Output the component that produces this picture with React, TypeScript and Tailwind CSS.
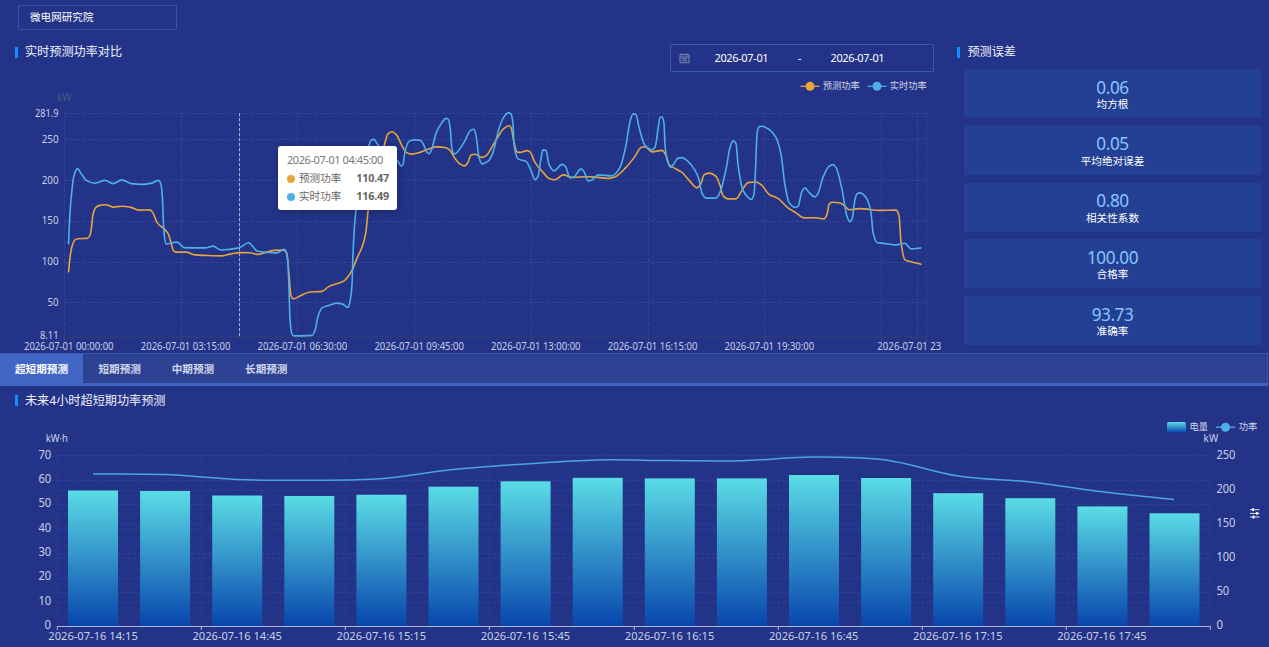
import React from "react";

type Point = [number, number];

const FORECAST: Point[] = [
  [68.5, 273], [70, 258], [72, 247], [75, 240.5], [78, 239.3], [87, 239], [90, 236], [91.5, 228], [93, 215], [96, 208], [100, 206], [104, 205.4],
  [107, 205.6], [113, 207.7], [122, 206.8], [131, 208], [139, 210.7], [150, 210.5], [153, 213.5], [157, 223], [164, 229.5], [168, 234], [171, 243],
  [173.5, 251.5], [176, 252.7], [186, 252.7], [195, 255.5], [205, 256], [222, 256.5], [231, 254.5], [240, 253.2], [250, 253.3], [257, 255],
  [266, 253], [274, 251], [284, 250.7], [287, 255], [289, 275], [291, 296.5], [293.5, 299.5], [301, 296], [309, 292.8], [322, 292], [329, 287],
  [344, 281.5], [352, 271], [356.5, 260], [363, 245], [366, 232], [368, 212], [372, 185], [378, 172], [384, 147], [388, 134.5], [392, 132.3],
  [396, 135], [404, 150], [407, 153.5], [411, 154.7], [420, 153], [430, 149], [436, 147.5], [446, 148.3], [450, 151], [455, 159], [460, 164.5],
  [464.5, 166.5], [468, 163], [471, 155.5], [475, 154.8], [482, 158], [486, 156.5], [490, 151], [497, 139], [504, 129], [509, 126.3], [511, 128],
  [514, 143], [517, 152.5], [520, 153], [527, 151.2], [530, 152.5], [535, 163], [543, 173], [549, 179], [555, 180.3], [563, 175.5], [573, 178],
  [587, 177.3], [598, 178], [609, 179], [615, 177.5], [626, 168], [635, 157], [641, 148], [645, 147.3], [652, 152.5], [662, 151], [666, 156],
  [669, 165], [674, 168.5], [682, 173], [690, 182], [697, 188.5], [701, 184], [704, 175.5], [709, 173.7], [716, 177], [720, 186], [723, 196],
  [728, 199.5], [736, 199.5], [742, 191], [748, 183.2], [756, 182.6], [762, 186], [769, 195], [778, 199], [788, 208.5], [796, 213.5], [804, 218.5],
  [815, 218.3], [824, 219.5], [827, 215], [829, 205], [832, 202.9], [840, 203.6], [844, 206], [849, 210.3], [860, 209.2], [880, 211], [896, 210.7],
  [899, 216], [901, 243], [905, 260.5], [912, 262.5], [921.5, 265],
];

const ACTUAL: Point[] = [
  [68.5, 245], [70, 213], [72, 190], [74, 176], [77.5, 169.2], [81, 174], [87, 181.5], [95, 183.8], [105, 181], [113, 184.2], [122, 180.5],
  [131, 184.2], [142, 185], [152, 183.7], [158.5, 181], [161, 185], [162.5, 200], [163.5, 225], [164.5, 238], [166, 244.5], [177, 242.7],
  [184, 248.2], [205, 248.5], [213, 246.7], [221, 250.6], [239, 248.5], [248.5, 243.3], [257, 251.5], [265, 252.8], [277, 253.5], [284, 250],
  [286, 252], [288, 265], [289, 290], [290, 320], [292, 335], [294, 336.5], [312, 336], [315, 331], [318, 317], [322, 308.5], [329, 306],
  [337, 303.7], [342, 304.5], [348, 308], [350, 302], [352, 285], [353, 255], [355, 220], [357, 205], [361, 180], [366, 160], [369, 146],
  [371, 141], [374, 140], [377, 144], [381, 150], [390, 158], [398, 162], [401, 166.5], [403, 165], [405, 152], [409, 142], [415, 140.5],
  [420, 140.8], [423, 144], [427, 153], [429, 154.3], [432, 149], [436, 134], [442, 123], [446, 119], [448, 119.5], [450, 127], [452, 150],
  [454.5, 154.5], [464, 143], [471, 130.5], [474, 129.8], [476, 136], [479, 158], [482, 164.5], [489, 161], [493, 153], [499, 129], [504, 117.5],
  [508, 113.5], [511, 114.5], [513, 125], [514, 145], [518, 159.5], [526, 162], [531, 171], [535, 180.3], [538, 177], [541, 159], [543, 150.5],
  [546, 151], [549, 165], [554, 171.5], [562, 165], [565.5, 167], [570, 178.5], [574, 177.5], [581, 169.5], [584, 172], [588, 181.5],
  [592, 180.5], [598, 175.5], [612, 176.5], [620, 168], [626, 146], [630, 122], [633, 114.5], [636, 115], [639, 128], [645, 146], [652, 150.5],
  [655, 148], [658, 130], [660, 118], [662, 117.5], [664, 124], [665, 145], [667, 160], [671, 168], [674, 164], [678, 158.7], [682, 158.2],
  [688, 162], [695, 171], [699, 180], [702, 194], [706, 198.7], [716, 198.7], [720, 193], [726, 170], [730, 148], [733, 141.5], [736, 144],
  [738, 165], [743, 191], [748, 198], [751, 200], [754, 195], [755.5, 170], [757, 135], [759, 127.3], [762, 126.8], [769, 130], [776, 138],
  [781, 155], [785, 186], [789, 203], [795, 208], [798, 207], [802, 192], [805, 188.5], [809, 193], [815, 197.5], [818, 194], [823, 178],
  [829, 167], [833, 165.2], [836, 168], [842, 190], [847, 217], [850, 222.5], [852, 220], [855, 200], [857, 194.5], [860, 193.5], [866, 198],
  [871, 213], [873, 233], [877, 243], [884, 244], [896, 245.5], [905, 243.8], [911, 249.5], [921.5, 248.5],
];

const POWER: Point[] = [
  [93, 474], [165, 474.6], [237, 479.4], [309, 480.2], [381, 478.8], [453, 469.5], [525, 464], [597, 460], [669, 460.6], [741, 460.7],
  [813, 457], [886, 460], [958, 476], [1030, 482], [1102, 491.8], [1174, 499.5],
];

const BAR_TOPS = [490.5, 491, 495.5, 496, 494.7, 486.7, 481.3, 477.8, 478.4, 478.4, 475, 478, 493.2, 498.2, 506.4, 513.3];

/* Cubic interpolation through the points; monotone unless loose is set */
function smooth(p: Point[], loose = false): string {
  const n = p.length;
  const d = p.slice(1).map((q, i) => (q[1] - p[i][1]) / (q[0] - p[i][0]));
  const m = p.map((_, i) => {
    if (i === 0) return d[0];
    if (i === n - 1) return d[n - 2];
    if (loose) return (d[i - 1] + d[i]) / 2;
    if (d[i - 1] * d[i] <= 0) return 0;
    const a = p[i][0] - p[i - 1][0];
    const b = p[i + 1][0] - p[i][0];
    return (3 * (a + b)) / ((2 * b + a) / d[i - 1] + (b + 2 * a) / d[i]);
  });
  let out = `M${p[0][0]},${p[0][1]}`;
  for (let i = 1; i < n; i++) {
    const h = (p[i][0] - p[i - 1][0]) / 3;
    out += `C${p[i - 1][0] + h},${p[i - 1][1] + m[i - 1] * h} ${p[i][0] - h},${p[i][1] - m[i] * h} ${p[i][0]},${p[i][1]}`;
  }
  return out;
}

function Title({ children }: { children: React.ReactNode }) {
  return (
    <h2 className="flex h-4 items-center gap-[7.4px] text-[12.15px] leading-4 text-[#eef1fb]">
      <span className="h-[11px] w-[3px] bg-[#168cff]" />
      {children}
    </h2>
  );
}

function LegendLine({ x, y, color }: { x: number; y: number; color: string }) {
  return (
    <g>
      <path d={`M${x},${y}h19`} stroke={color} strokeWidth="1.3" />
      <circle cx={x + 9.5} cy={y} r="4.5" fill={color} />
    </g>
  );
}

const Y_TOP: [string, number, number][] = [
  ["281.9", 113.5, 23.5], ["250", 139.5, 16.8], ["200", 180.5, 16.8], ["150", 221.3, 16.8], ["100", 262, 16.8], ["50", 302.8, 11], ["8.11", 337, 18.5],
];
const X_TOP: [string, number, number][] = [
  ["2026-07-01 00:00:00", 24, 89.5], ["2026-07-01 03:15:00", 140.8, 89.5], ["2026-07-01 06:30:00", 257.6, 89.5], ["2026-07-01 09:45:00", 374.4, 89.5],
  ["2026-07-01 13:00:00", 491, 89.5], ["2026-07-01 16:15:00", 607.8, 89.5], ["2026-07-01 19:30:00", 724.6, 89.5], ["2026-07-01 23", 877.3, 64],
];
const GRID_TOP = [64.5, 181.5, 297.5, 414.5, 531.5, 648.5, 764.5, 881.5, 917.5, 926.5];

function PowerChart() {
  return (
    <svg className="block h-[278px] w-[948px]" viewBox="0 75 948 278" fill="none">
      <g stroke="#374a9b" strokeWidth="1" strokeDasharray="4 1.8" opacity="0.75">
        {Y_TOP.slice(0, 6).map(([t, y]) => (
          <path key={t} d={`M64.5,${Math.floor(y) + 0.5}H927`} />
        ))}
        {GRID_TOP.map((x) => (
          <path key={x} d={`M${x},113V336`} />
        ))}
      </g>
      <path d="M64,337H927" stroke="#2f4075" />
      <path d={GRID_TOP.filter((x) => x !== 917.5).map((x) => `M${x},337v4`).join("")} stroke="#354576" />
      <path d="M239.5,113V337" stroke="#a5aed7" strokeDasharray="3.3 1.7" />
      <g transform="translate(0 -0.6)" strokeWidth="1.6" strokeLinejoin="round">
        <path d={smooth(FORECAST)} stroke="#e8a53c" />
        <path d={smooth(ACTUAL)} stroke="#4fb0e8" />
      </g>
      <text x="57" y="100.5" fontSize="10.3" fill="#4a5a85" textLength="14.5" lengthAdjust="spacingAndGlyphs">kW</text>
      <g fontSize="10.4" fill="#cbd0e8">
        {Y_TOP.map(([t, y, w]) => (
          <text key={t} x={58.5 - w} y={y + (t === "8.11" ? 2 : 3)} textLength={w} lengthAdjust="spacingAndGlyphs">{t}</text>
        ))}
        {X_TOP.map(([t, x, w]) => (
          <text key={t} x={x} y="349.6" textLength={w} lengthAdjust="spacingAndGlyphs">{t}</text>
        ))}
      </g>
      <LegendLine x={800.5} y={86.3} color="#e8a53c" />
      <LegendLine x={867.5} y={86.3} color="#4fb0e8" />
      <g fontSize="9.3" fill="#d0d5ec">
        <text x="822.7" y="89.3">预测功率</text>
        <text x="889.7" y="89.3">实时功率</text>
      </g>
    </svg>
  );
}

function EnergyChart() {
  const step = 1153 / 16;
  const line = { left: 57, right: 1210, top: 455.5, bottom: 626.5 };
  return (
    <svg className="block h-[236px] w-[1269px]" viewBox="0 411 1269 236" fill="none">
      <defs>
        <linearGradient id="energy" x1="0" y1="0" x2="0" y2="1">
          <stop offset="0" stopColor="#5adce5" />
          <stop offset="0.5" stopColor="#3291c9" />
          <stop offset="1" stopColor="#0846ad" />
        </linearGradient>
      </defs>
      <g stroke="#34479a" strokeDasharray="4 1.8" opacity="0.65">
        {[0, 1, 2, 3, 4, 5, 6].map((i) => (
          <path key={i} d={`M${line.left},${Math.round(line.top + i * 24.4) + (i ? 0.5 : -0.5)}H${line.right}`} />
        ))}
        {[0, 1, 2, 3, 4].map((i) => (
          <path key={i} d={`M${line.left},${Math.round(line.top + i * 34.15) + (i ? 0.5 : -0.5)}H${line.right}`} />
        ))}
        {[0, 2, 4, 6, 8, 10, 12, 14, 16].map((i) => (
          <path key={i} d={`M${Math.round(line.left + i * step) + 0.3},455V626`} />
        ))}
      </g>
      <path d="M57,626.5H1210.5" stroke="#aeb6d9" />
      <path d={[0, 2, 4, 6, 8, 10, 12, 14, 16].map((i) => `M${Math.round(line.left + i * step) + 0.3},626v4`).join("")} stroke="#aeb6d9" />
      {BAR_TOPS.map((y, i) => (
        <rect key={i} x={68 + i * 72.1} y={y} width="50" height={626 - y} fill="url(#energy)" />
      ))}
      <path d={smooth(POWER, true)} stroke="#4aa6dc" strokeWidth="1.5" />
      <g fill="#cbd0e8" fontSize="11.8">
        {["70", "60", "50", "40", "30", "20", "10"].map((t, i) => (
          <text key={t} x="38.4" y={458.6 + i * 24.35} textLength="12.8" lengthAdjust="spacingAndGlyphs">{t}</text>
        ))}
        <text x="44.6" y="629" textLength="6.5" lengthAdjust="spacingAndGlyphs">0</text>
        {["250", "200", "150", "100"].map((t, i) => (
          <text key={t} x="1216.4" y={458.5 + i * 34.05} textLength="19" lengthAdjust="spacingAndGlyphs">{t}</text>
        ))}
        <text x="1216.4" y="595" textLength="12.8" lengthAdjust="spacingAndGlyphs">50</text>
        <text x="1216.4" y="629" textLength="6.5" lengthAdjust="spacingAndGlyphs">0</text>
      </g>
      <g fill="#cbd0e8" fontSize="11.6">
        {["14:15", "14:45", "15:15", "15:45", "16:15", "16:45", "17:15", "17:45"].map((t, i) => (
          <text key={t} x={48.3 + i * step * 2} y="640.3" textLength="89.5" lengthAdjust="spacingAndGlyphs">{`2026-07-16 ${t}`}</text>
        ))}
      </g>
      <g fill="#d0d5ec" fontSize="10.3">
        <text x="45.7" y="441.5" textLength="22.3" lengthAdjust="spacingAndGlyphs">kW·h</text>
        <text x="1203.6" y="441.8" textLength="14.5" lengthAdjust="spacingAndGlyphs">kW</text>
      </g>
      <rect x="1167" y="422" width="19" height="10.5" rx="1.8" fill="url(#energy)" />
      <LegendLine x={1216} y={427.2} color="#4fb0e8" />
      <g fontSize="9.3" fill="#d0d5ec">
        <text x="1189.5" y="429.6">电量</text>
        <text x="1238.7" y="429.6">功率</text>
      </g>
      <g stroke="#fff" strokeWidth="1">
        <path d="M1250,509.7h9.5M1250,513.4h9.5M1250,517h9.5" opacity="0.85" />
        <path d="M1253,508.3v2.8M1257,512v2.8M1253.5,515.6v2.8" strokeWidth="1.8" />
      </g>
    </svg>
  );
}

function Tooltip() {
  const rows = [
    { name: "预测功率", value: "110.47", dot: "bg-[#e8a53c]" },
    { name: "实时功率", value: "116.49", dot: "bg-[#4fb0e8]" },
  ];
  return (
    <div className="absolute left-[278px] top-[146px] h-[64px] w-[119px] rounded-[3px] bg-white pl-[9px] pr-[8px] pt-[6px] text-[10.6px] text-[#666] shadow-[1px_2px_8px_rgba(0,0,0,0.25)]">
      <div className="flex h-[17px] items-center whitespace-nowrap text-[11px] tracking-[-0.43px] text-[#777]">2026-07-01 04:45:00</div>
      {rows.map((r) => (
        <div key={r.name} className="flex h-[18px] items-center pt-px">
          <span className={`mr-[4px] size-[8px] shrink-0 rounded-full ${r.dot}`} />
          <span>{r.name}</span>
          <b className="ml-auto text-[10.8px] tracking-[-0.2px]">{r.value}</b>
        </div>
      ))}
    </div>
  );
}

const METRICS = [
  ["0.06", "均方根"],
  ["0.05", "平均绝对误差"],
  ["0.80", "相关性系数"],
  ["100.00", "合格率"],
  ["93.73", "准确率"],
];

export default function App() {
  return (
    <div className="flex h-[647px] w-[1269px] flex-col overflow-hidden bg-[#233387] font-['Noto_Sans','Noto_Sans_CJK_SC',sans-serif] text-white">
      <div className="flex h-[353px] shrink-0">
        <section className="relative flex w-[948px] shrink-0 flex-col">
          <div className="flex h-[75px] justify-between pr-[14px]">
            <div className="flex flex-col">
              <div className="ml-[18px] mt-[5px] flex h-[25px] w-[159px] items-center rounded-[1px] border border-[#3552ae] pl-[11px] text-[10.6px]">
                微电网研究院
              </div>
              <div className="ml-[14.6px] mt-[14px]">
                <Title>实时预测功率对比</Title>
              </div>
            </div>
            <div className="mt-[44px] flex h-7 w-[264px] items-center rounded-[1px] border border-[#3958b4] pt-px text-[11px] tracking-[-0.37px]">
              <svg className="-mt-px ml-[8px] h-[11px] w-[11px]" viewBox="0 0 11 11" fill="none" stroke="#8993b6" strokeWidth="0.9">
                <path d="M1 1.7h9v8H1zM1 4h9M3.2 .3v2M7.8 .3v2M2.8 5.7h5.4M2.8 7.7h5.4" />
              </svg>
              <span className="ml-[24.5px] w-[56px]">2026-07-01</span>
              <span className="w-[60px] pr-[2px] text-center">-</span>
              <span>2026-07-01</span>
            </div>
          </div>
          <PowerChart />
          <Tooltip />
        </section>
        <aside className="flex flex-1 flex-col pl-[9px] pr-2 pt-[44px]">
          <Title>预测误差</Title>
          <div className="ml-[7px] mt-[9px] flex flex-col gap-[7.8px]">
            {METRICS.map(([value, name]) => (
              <div key={name} className="flex h-[49px] flex-col items-center bg-[#244094] pt-[9.6px]">
                <span className="h-[18px] text-[17.2px] leading-[18px] tracking-[-0.45px] text-[#85c6fa]">{value}</span>
                <span className="pt-[0.4px] text-[10.6px] leading-[14px]">{name}</span>
              </div>
            ))}
          </div>
        </aside>
      </div>
      <nav className="mr-px flex h-[33px] shrink-0 border-b-[3px] border-r border-t border-b-[#4064c2] border-r-[#3958b4] border-t-[#3958b4] bg-[#2e4294] text-[10.6px] font-bold text-[#d3d8ed]">
        <div className="flex w-[83px] items-center justify-center bg-[#4266c4] pt-[3px] text-white">超短期预测</div>
        {["短期预测", "中期预测", "长期预测"].map((t) => (
          <div key={t} className="flex w-[73.3px] items-center justify-center pt-[3px]">{t}</div>
        ))}
      </nav>
      <section className="flex flex-1 flex-col">
        <div className="flex h-[25px] items-center pl-[14.6px] pt-[4px]">
          <Title>未来4小时超短期功率预测</Title>
        </div>
        <EnergyChart />
      </section>
    </div>
  );
}
